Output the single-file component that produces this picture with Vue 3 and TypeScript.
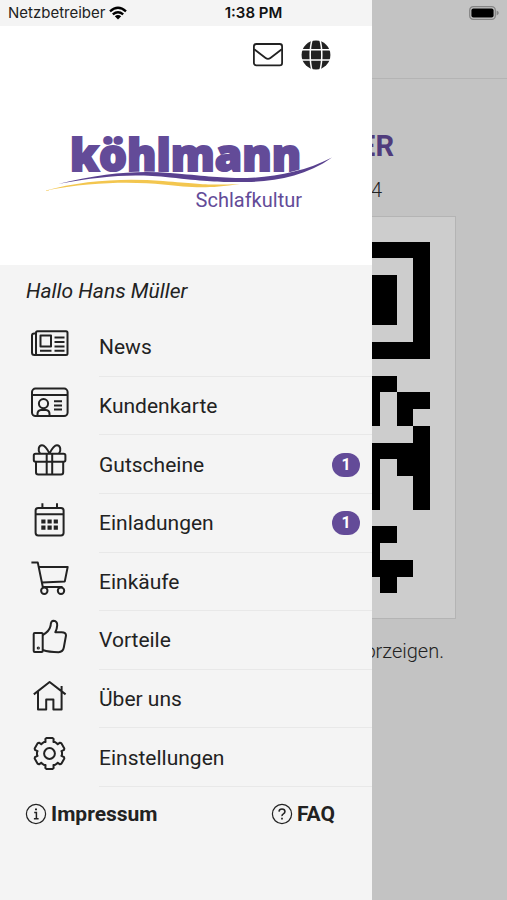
<script setup lang="ts">
interface MenuItem {
  label: string
  icon: string
  badge?: number
}

const items: MenuItem[] = [
  { label: 'News', icon: 'news' },
  { label: 'Kundenkarte', icon: 'card' },
  { label: 'Gutscheine', icon: 'gift', badge: 1 },
  { label: 'Einladungen', icon: 'calendar', badge: 1 },
  { label: 'Einkäufe', icon: 'cart' },
  { label: 'Vorteile', icon: 'thumb' },
  { label: 'Über uns', icon: 'house' },
  { label: 'Einstellungen', icon: 'gear' },
]

// Outline of a six-toothed gear around the centre of the 40 x 40 icon box.
const gearPoints: string = Array.from({ length: 6 }, (_, tooth) => {
  const corners: [number, number][] = [[-24, 12.6], [-19, 12.2], [-16, 15], [-11, 15.7], [11, 15.7], [16, 15], [19, 12.2], [24, 12.6]]
  return corners
    .map(([offset, radius]) => {
      const angle = ((tooth * 60 + offset - 90) * Math.PI) / 180
      return `${(20.5 + radius * Math.cos(angle)).toFixed(2)},${(20.5 + radius * Math.sin(angle)).toFixed(2)}`
    })
    .join(' ')
}).join(' ')

// Modules of the code, one string per row.
const qrRows: string[] = [
  '####', '...#', '##.#', '##.#', '##.#', '...#', '####',
  '....', '##..', '#.##', '#.#.', '...#', '####', '#.##',
  '#..#', '#..#', '....', '##..', '#...', '###.', '.#..',
]
const qrPath: string = qrRows
  .map((row, y) => [...row].map((cell, x) => (cell === '#' ? `M${x} ${y}h1v1h-1z` : '')).join(''))
  .join('')
</script>

<template>
  <div class="screen">
    <header class="status">
      <span class="carrier">
        Netzbetreiber
        <svg class="wifi" viewBox="0 0 18 14" aria-hidden="true">
          <g fill="none" stroke="#000" stroke-width="2.4">
            <path d="M1 5.3Q9-1.6 17 5.3" />
            <path d="M3.8 8.3Q9 4 14.2 8.3" />
          </g>
          <path d="M9 13.6 5.8 10.3Q9 7.8 12.2 10.3z" />
        </svg>
      </span>
      <span class="clock">1:38 PM</span>
      <svg class="battery" viewBox="0 0 30 14" aria-hidden="true">
        <rect x="0.7" y="0.7" width="25.6" height="12.6" rx="3.6" fill="none" stroke="#858585" stroke-width="1.3" />
        <rect x="2.4" y="2.4" width="22.2" height="9.2" rx="2" />
        <path d="M27.6 4.6q2.2 1 2.2 2.4t-2.2 2.4z" fill="#858585" />
      </svg>
    </header>

    <aside class="drawer">
      <div class="brand">
        <div class="actions">
          <button type="button" aria-label="Nachrichten">
            <svg viewBox="0 0 30 30" fill="none" stroke="#222" stroke-width="1.8" stroke-linejoin="round">
              <rect x="0.9" y="4" width="28.2" height="21.4" rx="2.4" />
              <path d="M1.2 9.2 12.6 18q2.4 1.8 4.8 0L28.8 9.2" />
            </svg>
          </button>
          <button type="button" aria-label="Sprache">
            <svg viewBox="0 0 30 30">
              <circle cx="15" cy="15" r="14.4" fill="#222" />
              <g fill="none" stroke="#fff" stroke-width="1.5">
                <path d="M0 9.8H30M0 20H30" />
                <path d="M11 0C8.6 8 8.6 22 11 30M19 0C21.4 8 21.4 22 19 30" />
              </g>
            </svg>
          </button>
        </div>
        <svg class="logo" viewBox="0 -20 292 110" role="img" aria-label="köhlmann Schlafkultur">
          <text class="logo-name" x="26" y="41">köhlmann</text>
          <path d="M0 61C40 50 80 48 119 51S160 55.5 196 54C160 59.5 145 57 119 54.5S50 51 0 61z" fill="#f3c64f" />
          <path d="M14 54C60 43 92 40.5 126 43S170 48 203 48C232 47 262 41 288 27.5C262 46 232 51.5 203 52S165 51.5 126 47.5S60 46 14 54z" fill="#59418f" stroke="#fff" stroke-width="1" paint-order="stroke" />
          <text class="logo-sub" x="258" y="77" text-anchor="end">Schlafkultur</text>
        </svg>
      </div>

      <p class="greeting">Hallo Hans Müller</p>

      <nav class="menu">
        <a v-for="item in items" :key="item.icon" href="#" class="row">
          <svg class="icon" viewBox="0 0 40 40" aria-hidden="true">
            <g v-if="item.icon === 'news'">
              <rect x="7" y="8.3" width="31.5" height="23.8" rx="1.5" />
              <path d="M7 10.4H5.2Q3 10.4 3 12.6V29.5Q3 32.1 5.4 32.1H8.5M11.5 12.6H22V23.4H11.5zM11 27.8H22.5M25.5 14.6H35.5M25.5 19H35.5M25.5 23.4H35.5M25.5 27.8H35.5" />
            </g>
            <g v-else-if="item.icon === 'card'">
              <rect x="3" y="6.6" width="35.6" height="27.4" rx="3.5" />
              <path d="M3 13H38.6M8.5 34V32Q8.5 28.4 12 28H17Q20.5 28.4 20.5 32V34M25 19.3H33M25 23.4H33M25 27.5H33" />
              <circle cx="14.5" cy="21.6" r="4.6" />
            </g>
            <g v-else-if="item.icon === 'gift'">
              <rect x="4.8" y="13.8" width="31.6" height="8" rx="1.8" />
              <path d="M7 21.8V32.3Q7 34.5 9.2 34.5H32Q34.2 34.5 34.2 32.3V21.8M17.7 13.8V34.5M23.2 13.8V34.5" />
              <path d="M20.5 13.6C18 8.5 16 5.2 13 5.3C9.5 5.5 8.6 10 11 13.6M20.5 13.6C23 8.5 25 5.2 28 5.3C31.5 5.5 32.4 10 30 13.6" />
            </g>
            <g v-else-if="item.icon === 'calendar'">
              <rect x="6.6" y="9" width="28" height="27.4" rx="2.6" />
              <path d="M6.6 15.3H34.6M13.4 4.2V9M28 4.2V9" />
              <path d="M14.4 20.4v4.2M20.6 20.4v4.2M26.8 20.4v4.2M14.4 26.6v4.2M20.6 26.6v4.2M26.8 26.6v4.2" stroke-width="4.2" />
            </g>
            <g v-else-if="item.icon === 'cart'">
              <path d="M2.4 4.6H8.8L13.8 29H33.5M9.7 8.9H38.7L35.8 23.4L12.8 24.4" />
              <circle cx="15.3" cy="32.8" r="3.2" />
              <circle cx="32" cy="32.8" r="3.2" />
            </g>
            <g v-else-if="item.icon === 'thumb'">
              <rect x="4.7" y="17" width="9" height="19" rx="1" />
              <circle cx="9.3" cy="32" r="0.6" />
              <path d="M13.7 19Q20.3 15.6 21.6 9.8Q21.8 4.8 24.6 4.8Q28.4 5.2 28.2 9.4Q28 13 26.3 16.2H32.5Q37.2 16.4 37 19.5L34.8 31.5Q34 36 29.5 36.2Q20 36.2 13.7 34" />
            </g>
            <g v-else-if="item.icon === 'house'">
              <path d="M4.8 19.4 20.6 7 36.6 19.4M9 16.2V34.4H17.2V24.4H24.4V34.4H32.6V11" />
            </g>
            <g v-else>
              <polygon :points="gearPoints" />
              <circle cx="20.5" cy="20.5" r="5.4" />
            </g>
          </svg>
          <span class="entry">
            <span class="label">{{ item.label }}</span>
            <span v-if="item.badge" class="badge">{{ item.badge }}</span>
          </span>
        </a>
      </nav>

      <footer class="links">
        <a href="#">
          <svg viewBox="0 0 22 22" aria-hidden="true">
            <circle cx="11" cy="11" r="9.6" />
            <path d="M9.2 9.4H11.4V15.6M8.9 15.8H13.6" stroke-width="1.5" />
            <path d="M11 5.4V7.2" stroke-width="2" />
          </svg>
          Impressum
        </a>
        <a href="#">
          <svg viewBox="0 0 22 22" aria-hidden="true">
            <circle cx="11" cy="11" r="9.6" />
            <path d="M8 8.6Q8.2 6 11 6T14 8.6Q14 10 12.4 10.8T11 13.2" stroke-width="1.5" />
            <path d="M11 14.8V16.4" stroke-width="1.7" />
          </svg>
          FAQ
        </a>
      </footer>
    </aside>

    <main class="page">
      <div class="toolbar"></div>
      <h1 class="title">ER</h1>
      <p class="number">4</p>
      <div class="code">
        <svg viewBox="0 0 4 21" aria-hidden="true" shape-rendering="crispEdges"><path :d="qrPath" /></svg>
      </div>
      <p class="hint">orzeigen.</p>
    </main>
  </div>
</template>

<style>
body {
  margin: 0;
  background: #c3c3c3;
}
</style>

<style scoped>
.screen {
  position: relative;
  display: flex;
  min-height: 100vh;
  overflow: hidden;
  font-family: Roboto, "Liberation Sans", sans-serif;
  font-size: 21px;
  line-height: 24px;
  color: #222;
}

.status {
  position: absolute;
  inset: 0 0 auto;
  display: grid;
  grid-template-columns: 1fr auto 1fr;
  align-items: center;
  height: 26px;
  padding: 0 8px;
  font-family: Inter, "Liberation Sans", sans-serif;
  font-size: 15px;
  line-height: 26px;
}

.carrier {
  display: flex;
  align-items: center;
  gap: 4px;
}

.wifi {
  width: 18px;
  height: 14px;
}

.clock {
  font-weight: 600;
  color: #111;
}

.battery {
  justify-self: end;
  width: 30px;
  height: 14px;
}

.drawer {
  flex: 0 0 372px;
  box-sizing: border-box;
  padding-top: 26px;
  background: #f4f4f4;
}

.brand {
  display: flex;
  flex-direction: column;
  height: 239px;
  background: #fff;
}

.actions {
  display: flex;
  justify-content: flex-end;
  gap: 18px;
  padding: 14px 41px 0 0;
}

.actions button {
  width: 30px;
  height: 30px;
  padding: 0;
  border: 0;
  background: none;
}

.actions svg {
  display: block;
  width: 30px;
  height: 30px;
}

.logo {
  width: 292px;
  height: 110px;
  margin: 40px 0 0 44px;
}

.logo text {
  fill: #634b98;
}

.logo-name {
  font-family: "Open Sans", Roboto, sans-serif;
  font-size: 44px;
  font-weight: 800;
  stroke: #634b98;
  stroke-width: 2;
}

.logo-sub {
  font-size: 20px;
}

.greeting {
  margin: 0;
  padding: 14px 26px 15px;
  font-style: italic;
}

.menu {
  display: grid;
  grid-auto-rows: 1fr;
  height: 469px;
}

.row {
  display: flex;
  padding-left: 29px;
  color: inherit;
  text-decoration: none;
}

.icon {
  width: 40px;
  height: 40px;
  margin: 5px 30px 0 0;
  fill: none;
  stroke: #222;
  stroke-width: 2;
  stroke-linejoin: round;
}

.entry {
  flex: 1;
  display: flex;
  align-items: center;
  justify-content: space-between;
  padding: 1px 12px 0 0;
  border-bottom: 1px solid #e8e8e8;
}

.badge {
  width: 28px;
  border-radius: 12px;
  background: #634b98;
  color: #fff;
  font-size: 16px;
  font-weight: 700;
  text-align: center;
}

.links {
  display: flex;
  justify-content: space-between;
  padding: 15px 37px 15px 25px;
}

.links a {
  display: flex;
  align-items: center;
  gap: 4px;
  color: inherit;
  font-weight: 700;
  text-decoration: none;
}

.links svg {
  width: 22px;
  height: 22px;
  fill: none;
  stroke: #222;
  stroke-width: 1.2;
}

.page {
  flex: 1;
  min-width: 0;
  overflow: hidden;
  background: #c3c3c3;
}

.toolbar {
  height: 78px;
  border-bottom: 1px solid #b4b4b4;
}

.title,
.number,
.code,
.hint {
  display: flex;
  justify-content: flex-end;
  margin: 0;
}

.title {
  padding: 50px 113px 0 0;
  font-size: 29px;
  line-height: 34px;
  color: #503c7c;
}

.number,
.hint {
  font-size: 20px;
  font-weight: 300;
  color: #222;
}

.number {
  padding: 15px 125px 14px 0;
}

.code {
  margin-right: 51px;
  padding: 24px 25px 24px 0;
  border: solid #b4b4b4;
  border-width: 1px 1px 1px 0;
  background: #cdcdcd;
}

.code svg {
  flex: none;
  width: 67px;
  height: 353px;
}

.hint {
  padding: 20px 63px 0 0;
}
</style>
